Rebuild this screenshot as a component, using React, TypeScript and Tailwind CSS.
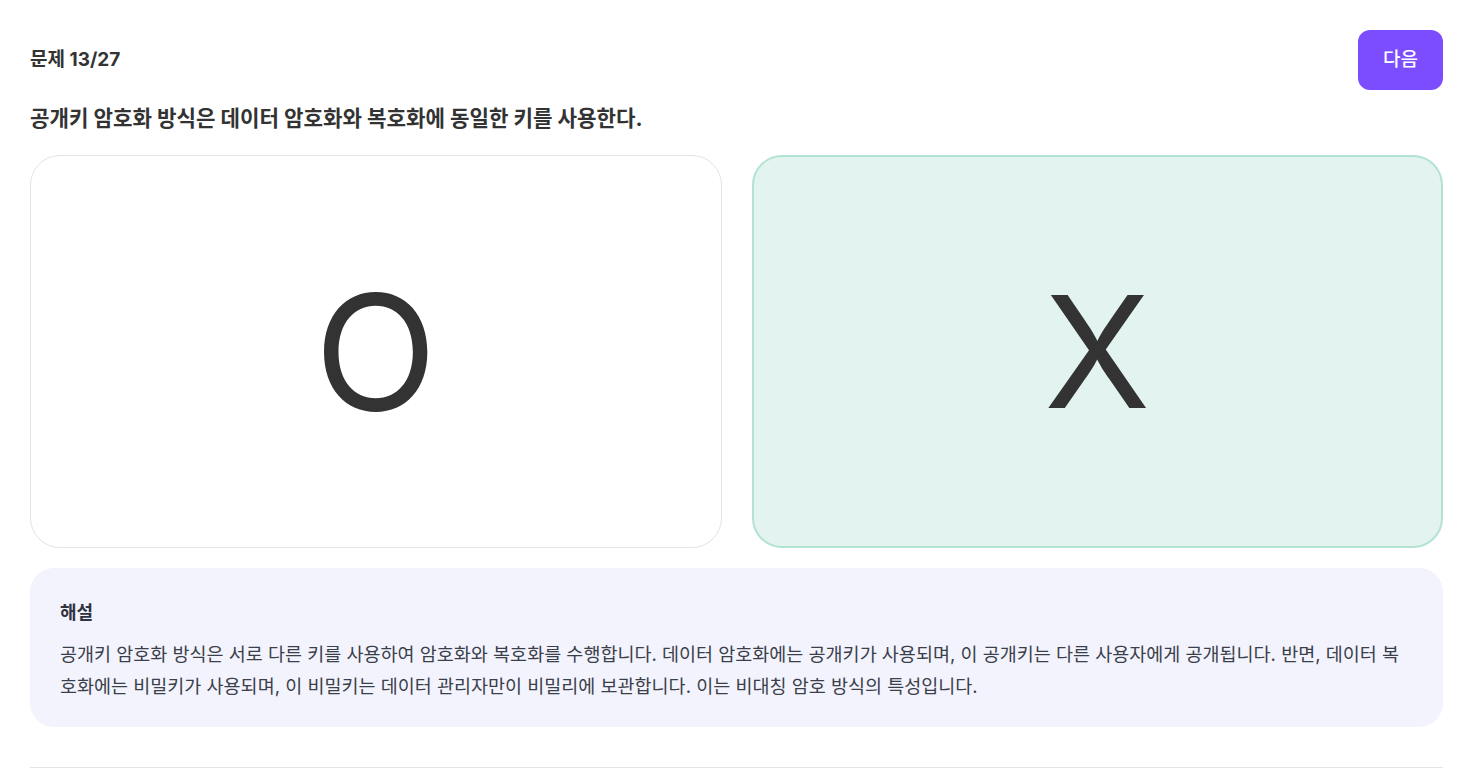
export default function App() {
  return (
    <div
      className="min-h-screen bg-white text-[#333333]"
      style={{ fontFamily: '"Inter", "Noto Sans CJK KR", sans-serif' }}
    >
      <div className="px-[30px] pt-[30px]">
        <div className="flex items-center justify-between">
          <p className="text-[19px] font-bold">문제 13/27</p>
          <button className="h-[60px] w-[85px] rounded-[12px] bg-[#7b4dff] text-[19px] font-medium text-white">
            다음
          </button>
        </div>

        <h1 className="mt-[13px] text-[21.2px] font-bold leading-[30px]">
          공개키 암호화 방식은 데이터 암호화와 복호화에 동일한 키를 사용한다.
        </h1>

        <div className="mt-[22px] grid grid-cols-2 gap-[30px]">
          <button className="flex h-[393px] items-center justify-center rounded-[30px] border border-[#e3e3e8] bg-white">
            <span className="text-[160px] font-normal leading-none text-[#333333]">O</span>
          </button>
          <button className="flex h-[393px] items-center justify-center rounded-[30px] border-2 border-[#b3e2d5] bg-[#e3f4f0]">
            <span className="text-[156px] font-normal leading-none text-[#333333]">X</span>
          </button>
        </div>

        <div className="mt-[20px] rounded-[24px] bg-[#f3f3fd] px-[30px] pb-[25px] pt-[32px]">
          <p className="text-[18px] font-bold leading-[26px] text-[#2f3441]">해설</p>
          <p className="mt-[12px] break-all text-[18.5px] leading-[32px] text-[#3a3f4a]">
            공개키 암호화 방식은 서로 다른 키를 사용하여 암호화와 복호화를 수행합니다. 데이터 암호화에는 공개키가 사용되며, 이 공개키는 다른 사용자에게 공개됩니다. 반면, 데이터 복호화에는 비밀키가 사용되며, 이 비밀키는 데이터 관리자만이 비밀리에 보관합니다. 이는 비대칭 암호 방식의 특성입니다.
          </p>
        </div>

        <div className="mt-[40px] border-t border-[#e3e3e8]" />
      </div>
    </div>
  );
}
